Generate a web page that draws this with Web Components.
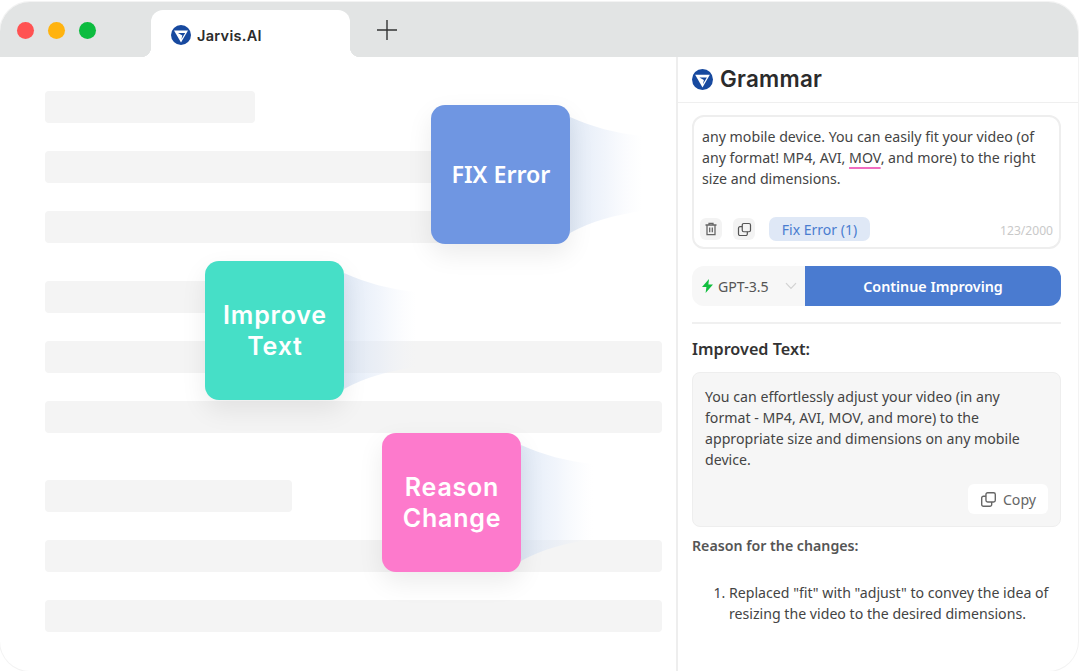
<!DOCTYPE html>
<html lang="en"><head><meta charset="utf-8"><title>Jarvis.AI Grammar</title>
<style>
html,body{margin:0;padding:0;background:#fff;height:671px;overflow:hidden}
body{font-family:"Noto Sans",sans-serif}
</style></head><body>
<x-window>
  <x-titlebar slot="top"></x-titlebar>
  <x-document slot="left"></x-document>
  <x-grammar slot="right"></x-grammar>
</x-window>
<script>
const def=(name,html)=>customElements.define(name,class extends HTMLElement{
  constructor(){super();this.attachShadow({mode:'open'}).innerHTML=html;}
});
const LOGO=(s)=>`<svg width="${s}" height="${s}" viewBox="0 0 24 24" style="display:block;flex:none"><circle cx="12" cy="12" r="12" fill="#17499f"/><path d="M3.6 6.6H20.4L12 21Z" fill="#fff"/><path d="M8.4 9.6H17L12.4 17.4 13.6 12.6Z" fill="#17499f"/></svg>`;
const COPY=(s,c)=>`<svg width="${s}" height="${s}" viewBox="0 0 16 16" fill="none" stroke="${c}" stroke-width="1.3" stroke-linejoin="round" style="display:block"><rect x="5.6" y="1.6" width="8.8" height="8.8" rx="1.6"/><path d="M5.6 5H3.2A1.6 1.6 0 0 0 1.6 6.6V12.8A1.6 1.6 0 0 0 3.2 14.4H9.4A1.6 1.6 0 0 0 11 12.8V10.4"/></svg>`;

def('x-window',`<style>
:host{display:flex;flex-direction:column;width:1078px;height:669px;margin-top:2px;border-radius:30px;overflow:hidden;background:#fff;box-shadow:0 0 0 1px #f3f3f3}
.main{flex:1;display:flex;min-height:0}
::slotted([slot=left]){width:676px;flex:none}
::slotted([slot=right]){flex:1}
</style><slot name="top"></slot><div class="main"><slot name="left"></slot><slot name="right"></slot></div>`);

def('x-titlebar',`<style>
:host{display:flex;align-items:flex-start;height:55px;background:#e2e4e4;box-sizing:border-box;padding-left:17px;flex:none}
.lights{display:flex;gap:14px;margin-top:20px;width:134px;flex:none}
.lights i{width:17px;height:17px;border-radius:50%;display:block}
.tab{position:relative;margin-top:8px;width:199px;height:47px;background:#fff;border-radius:12px 12px 0 0;display:flex;align-items:center;padding:3px 0 0 20px;box-sizing:border-box;gap:6px;flex:none;
font:600 14.5px Inter,sans-serif;color:#2b2b2b;letter-spacing:.3px}
.tab:before,.tab:after{content:"";position:absolute;bottom:0;width:10px;height:10px}
.tab:before{left:-10px;background:radial-gradient(circle at 0 0,transparent 10px,#fff 10.5px)}
.tab:after{right:-10px;background:radial-gradient(circle at 100% 0,transparent 10px,#fff 10.5px)}
.plus{margin:18px 0 0 27px;display:block}
</style><div class="lights"><i style="background:#ff5252"></i><i style="background:#ffb30f"></i><i style="background:#0cbc3f"></i></div>
<div class="tab">${LOGO(20)}<span>Jarvis.AI</span></div>
<svg class="plus" width="20" height="20" viewBox="0 0 20 20" stroke="#333" stroke-width="1.4"><path d="M10 0V20M0 10H20"/></svg>`);

def('x-bar',`<style>:host{display:block;height:32px;background:#f4f4f4;border-radius:4px;flex:none}</style>`);

def('x-feature',`<style>
:host{position:absolute;width:139px;height:139px;display:block}
.card{position:relative;box-sizing:border-box;width:139px;height:139px;border-radius:14px;background:var(--c);color:#fff;display:flex;align-items:center;justify-content:center;text-align:center;box-shadow:0 10px 26px rgba(0,0,0,.08);font:600 25px/31px Inter,sans-serif;letter-spacing:.8px;padding-left:1px}
svg{position:absolute;left:139px;top:0}
</style><svg width="80" height="139" viewBox="0 0 80 139"><defs><linearGradient id="g"><stop offset="0" stop-color="#d3e0f2" stop-opacity=".7"/><stop offset=".5" stop-color="#dfe8f7" stop-opacity=".42"/><stop offset="1" stop-color="#eef2fb" stop-opacity="0"/></linearGradient></defs><path d="M0 12C22 22 45 28 72 31V106C45 110 22 116 0 128Z" fill="url(#g)"/></svg><div class="card"><slot></slot></div>`);

def('x-document',`<style>
:host{display:block;position:relative;box-sizing:border-box;padding:34px 14px 0 45px}
.col{display:flex;flex-direction:column}
x-bar{margin-bottom:28px}
.a{width:210px}.b{width:400px}.c{width:180px}.d{width:247px}
.s1{margin-bottom:38px}.s2{margin-bottom:47px}
.fix{left:431px;top:48px;--c:#6f96e2}
.imp{left:205px;top:204px;--c:#46dfc7}
.rea{left:382px;top:376px;--c:#fd7acc}
.fe{font:600 23.2px "Noto Sans",sans-serif;letter-spacing:0;position:relative;top:-1px}
</style><div class="col">
<x-bar class="a"></x-bar><x-bar class="b"></x-bar><x-bar class="b s1"></x-bar>
<x-bar class="c"></x-bar><x-bar></x-bar><x-bar class="s2"></x-bar>
<x-bar class="d"></x-bar><x-bar></x-bar><x-bar></x-bar></div>
<x-feature class="fix"><span class="fe">FIX Error</span></x-feature>
<x-feature class="imp">Improve<br>Text</x-feature>
<x-feature class="rea">Reason<br>Change</x-feature>`);

def('x-grammar',`<style>
:host{display:block;box-sizing:border-box;border-left:2px solid #eeeeee;color:#444;font:14.15px/21px "Noto Sans",sans-serif}
*{box-sizing:border-box}
.head{height:46px;border-bottom:1px solid #efefef;display:flex;align-items:center;gap:7px;padding:0 0 0 14px;font:600 22.4px Inter,sans-serif;color:#2b2b2b;letter-spacing:.25px}
.head span{position:relative;top:-1px}
.body{padding:12px 17px 0 14px}
.input{height:134px;border:2px solid #eeeeee;border-radius:12px;display:flex;flex-direction:column;padding:9px 6px 6px 8px}
.input .txt{flex:1;font-size:14.18px}
.input .txt span{display:block;white-space:nowrap}
u{text-decoration:underline #f06cc0 2px;text-underline-offset:4px}
.tools{display:flex;align-items:center;margin-left:-2px}
.ib{width:22px;height:22px;background:#f3f3f3;border-radius:6px;display:flex;align-items:center;justify-content:center;margin-right:11px}
.pill{margin-left:3px;height:24px;width:101px;border-radius:7px;background:#dfe8f6;color:#4a7dd0;display:flex;align-items:center;justify-content:center;font-size:14px}
.cnt{margin-left:auto;font-size:12.1px;color:#c9c9c9;padding-top:2px}
.act{display:flex;height:40px;margin-top:17px;border-radius:12px;overflow:hidden}
.sel{width:113px;background:#f7f7f7;display:flex;align-items:center;padding-left:10px;color:#555;flex:none}
.sel span{margin-left:5px}
.sel svg:last-child{margin-left:auto;margin-right:8px}
.go{flex:1;background:#4a7bd0;color:#fff;display:flex;align-items:center;justify-content:center;font-weight:600;font-size:14.3px}
hr{border:0;height:2px;background:#f0f0f0;margin:16px 0 0}
h3{margin:14px 0 0;font:600 16.2px/22px "Noto Sans",sans-serif;color:#333}
.res{height:155px;margin-top:12px;background:#f6f6f6;border:1px solid #eeeeee;border-radius:8px;padding:13px 12px 0 12px;display:flex;flex-direction:column}
.res p{margin:0;flex:1}
.cp{align-self:flex-end;width:80px;height:30px;background:#fff;border-radius:6px;display:flex;align-items:center;justify-content:center;gap:6px;margin:0 0 12px;color:#666}
h4{margin:8px 0 0;font:600 14.2px/21px "Noto Sans",sans-serif;color:#555}
ol{margin:26px 0 0;padding:0 0 0 37px}
</style>
<div class="head">${LOGO(21)}<span>Grammar</span></div>
<div class="body">
<div class="input"><div class="txt"><span>any mobile device. You can easily fit your video (of</span><span>any format! MP4, AVI, <u>MOV</u>, and more) to the right</span><span>size and dimensions.</span></div>
<div class="tools"><div class="ib"><svg width="14" height="14" viewBox="0 0 14 14" fill="none" stroke="#666" stroke-width="1.3"><path d="M1.5 3H12.5M5 3V1.3H9V3M3 3V12.7H11V3M5.7 5.5V10.3M8.3 5.5V10.3"/></svg></div>
<div class="ib">${COPY(15,'#555')}</div><div class="pill">Fix Error (1)</div><span class="cnt">123/2000</span></div></div>
<div class="act"><div class="sel"><svg width="11" height="14" viewBox="0 0 11 14"><path d="M7 0 0 8H4.4L3.6 14 11 5.6H6.4Z" fill="#12bf3f"/></svg><span>GPT-3.5</span><svg width="12" height="8" viewBox="0 0 12 8" fill="none" stroke="#d2d2d2" stroke-width="1.2"><path d="M1 1.2 6 6.4 11 1.2"/></svg></div><div class="go">Continue Improving</div></div>
<hr>
<h3>Improved Text:</h3>
<div class="res"><p>You can effortlessly adjust your video (in any format - MP4, AVI, MOV, and more) to the appropriate size and dimensions on any mobile device.</p><div class="cp">${COPY(17,'#666')}<span>Copy</span></div></div>
<h4>Reason for the changes:</h4>
<ol><li>Replaced "fit" with "adjust" to convey the idea of resizing the video to the desired dimensions.</li></ol>
</div>`);
</script></body></html>
